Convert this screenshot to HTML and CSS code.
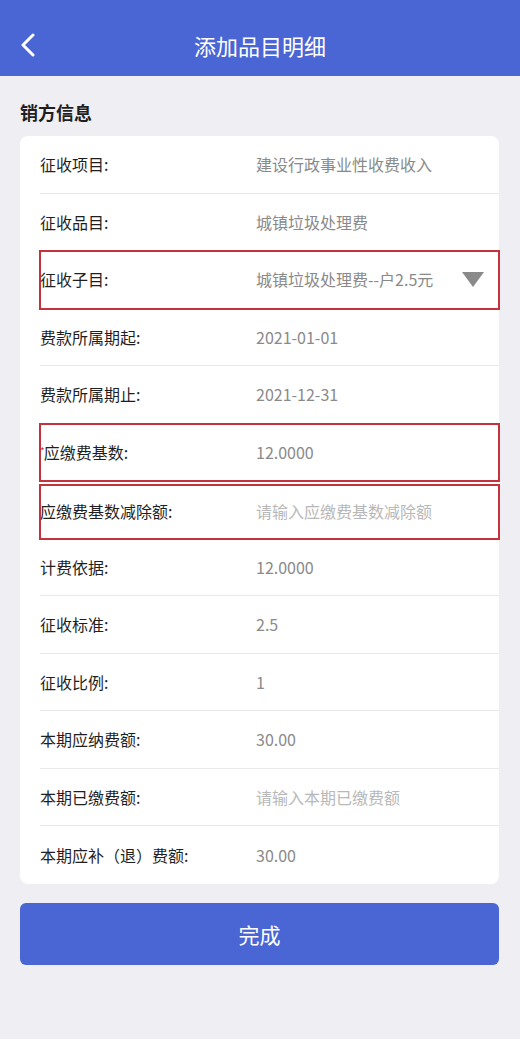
FILE: index.html
```html
<!DOCTYPE html>
<html lang="zh-CN">
<head>
    <meta charset="UTF-8">
    <meta name="viewport" content="width=device-width, initial-scale=1.0">
    <title>添加品目明细</title>
    <link rel="stylesheet" href="styles.css">
</head>
<body>

<div class="header">
    <div class="back">
        <svg width="16" height="24" viewBox="0 0 16 24">
            <path d="M13 2 L3 12 L13 22" fill="none" stroke="#fff" stroke-width="3" stroke-linecap="round" stroke-linejoin="round"/>
        </svg>
    </div>
    <div class="title">添加品目明细</div>
    <div></div>
</div>

<div class="section-title">销方信息</div>

<div class="card">
    <div class="row">
        <span class="label">征收项目:</span>
        <span class="value">建设行政事业性收费收入</span>
    </div>
    <div class="row">
        <span class="label">征收品目:</span>
        <span class="value">城镇垃圾处理费</span>
    </div>
    <div class="row marked">
        <span class="label">征收子目:</span>
        <span class="value">城镇垃圾处理费--户2.5元</span>
        <span class="caret"></span>
    </div>
    <div class="row">
        <span class="label">费款所属期起:</span>
        <span class="value">2021-01-01</span>
    </div>
    <div class="row">
        <span class="label">费款所属期止:</span>
        <span class="value">2021-12-31</span>
    </div>
    <div class="row marked">
        <span class="label"><i class="req">*</i>应缴费基数:</span>
        <span class="value">12.0000</span>
    </div>
    <div class="row marked">
        <span class="label">应缴费基数减除额:</span>
        <span class="value placeholder">请输入应缴费基数减除额</span>
    </div>
    <div class="row">
        <span class="label">计费依据:</span>
        <span class="value">12.0000</span>
    </div>
    <div class="row">
        <span class="label">征收标准:</span>
        <span class="value">2.5</span>
    </div>
    <div class="row">
        <span class="label">征收比例:</span>
        <span class="value">1</span>
    </div>
    <div class="row">
        <span class="label">本期应纳费额:</span>
        <span class="value">30.00</span>
    </div>
    <div class="row">
        <span class="label">本期已缴费额:</span>
        <span class="value placeholder">请输入本期已缴费额</span>
    </div>
    <div class="row">
        <span class="label">本期应补（退）费额:</span>
        <span class="value">30.00</span>
    </div>
</div>

<button class="submit">完成</button>

</body>
</html>
```

FILE: styles.css
```css
body {
    margin: 0;
    padding: 0;
    background-color: #eeeef3;
    font-family: "Noto Sans CJK SC", "Noto Sans", sans-serif;
    color: #1f1f1f;
}
.header {
    height: 76px;
    box-sizing: border-box;
    padding-top: 14px;
    background-color: #4a66d4;
    display: grid;
    grid-template-columns: 60px 1fr 60px;
    align-items: center;
    color: #fff;
}
.back {
    padding-left: 20px;
    display: flex;
    align-items: center;
}
.title {
    text-align: center;
    font-size: 22px;
}
.section-title {
    padding: 24px 20px 12px;
    font-size: 18px;
    line-height: 24px;
    font-weight: bold;
}
.card {
    margin: 0 21px 0 20px;
    padding-left: 20px;
    background-color: #fff;
    border-radius: 8px;
}
.row {
    height: 57.5px;
    box-sizing: border-box;
    display: flex;
    align-items: center;
    border-bottom: 1px solid #e9e9ec;
}
.row:last-child {
    border-bottom: none;
}
.row.marked {
    outline: 2px solid #c4333d;
    outline-offset: -1px;
}
.row.marked + .row.marked {
    margin-top: 4px;
    height: 53.5px;
}
.label {
    width: 216px;
    flex-shrink: 0;
    font-size: 16px;
}
.req {
    font-style: normal;
    color: #d9303a;
    font-size: 10px;
    vertical-align: 4px;
    margin-right: -1px;
}
.value {
    font-size: 16px;
    color: #8a8a8a;
}
.value.placeholder {
    color: #b8b8b8;
}
.caret {
    margin-left: auto;
    margin-right: 15px;
    width: 0;
    height: 0;
    border-left: 11px solid transparent;
    border-right: 11px solid transparent;
    border-top: 15px solid #8a8a8a;
}
.submit {
    display: block;
    width: 479px;
    height: 62px;
    margin: 19px 0 0 20px;
    border: none;
    border-radius: 6px;
    background-color: #4a66d4;
    color: #fff;
    font-family: "Noto Sans CJK SC", sans-serif;
    font-size: 21px;
}
```
